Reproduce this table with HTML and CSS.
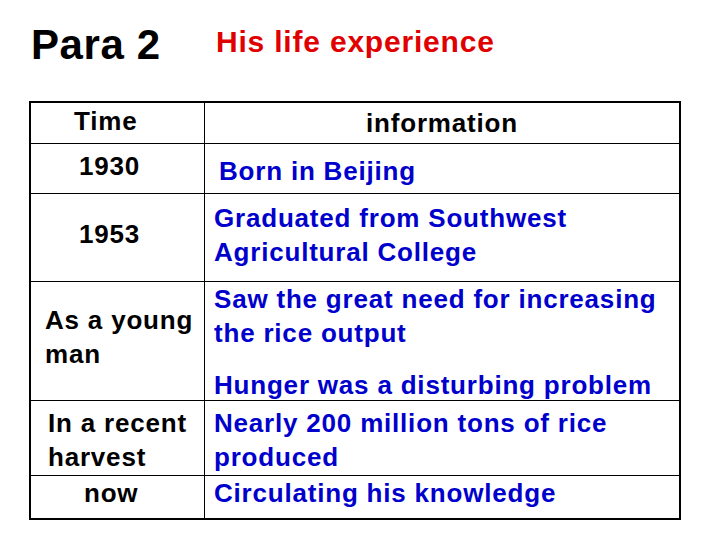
FILE: index.html
```html
<!DOCTYPE html>
<html lang="en">
<head>
<meta charset="utf-8">
<title>Para 2 - His life experience</title>
<link rel="stylesheet" href="styles.css">
</head>
<body>
<div class="slide">
  <div class="heading">
    <h1 class="para">Para 2</h1>
    <h2 class="topic">His life experience</h2>
  </div>
  <div class="grid">
    <div class="cell time c-head"><p class="pt-1">Time</p></div>
    <div class="cell info c-info"><p class="pt-3">information</p></div>

    <div class="cell time c-year"><p class="pt-5">1930</p></div>
    <div class="cell info c-born"><p class="pt-10">Born in Beijing</p></div>

    <div class="cell time c-year"><p class="pt-23">1953</p></div>
    <div class="cell info c-text"><p class="pt-7 shift-left">Graduated from Southwest<br>Agricultural College</p></div>

    <div class="cell time c-young"><p class="pt-21">As a young<br>man</p></div>
    <div class="cell info c-text"><p class="mt-3">Saw the great need for increasing<br>the rice output</p><p class="gap">Hunger was a disturbing problem</p></div>

    <div class="cell time c-recent"><p class="pt-5">In a recent<br>harvest</p></div>
    <div class="cell info c-text"><p class="pt-5">Nearly 200 million tons of rice<br>produced</p></div>

    <div class="cell time c-now last"><p class="mt-2">now</p></div>
    <div class="cell info c-text last"><p class="mt-1">Circulating his knowledge</p></div>
  </div>
</div>
</body>
</html>
```
FILE: styles.css
```css
html, body {
  margin: 0;
  padding: 0;
  background: #ffffff;
}

body {
  font-family: "Liberation Sans", Arial, sans-serif;
  font-weight: bold;
  color: #000000;
}

.slide {
  width: 720px;
  height: 540px;
  box-sizing: border-box;
  padding: 21px 0 0 29px;
  overflow: hidden;
}

.heading {
  display: flex;
  align-items: flex-start;
  height: 48px;
}

.para {
  margin: 0;
  width: 187px;
  box-sizing: border-box;
  padding-left: 2px;
  font-size: 42px;
  line-height: 48px;
  letter-spacing: 0.6px;
  font-weight: bold;
  color: #000000;
}

.topic {
  margin: 3px 0 0 0;
  font-size: 30px;
  line-height: 36px;
  letter-spacing: 0.8px;
  font-weight: bold;
  color: #e00000;
}

.grid {
  margin-top: 32px;
  width: 652px;
  box-sizing: border-box;
  border: 2px solid #000000;
  display: grid;
  grid-template-columns: 174px 1fr;
  grid-template-rows: 41px 50px 88px 119px 75px 42px;
}

.cell {
  box-sizing: border-box;
  border-bottom: 1px solid #000000;
  font-size: 26px;
  line-height: 34px;
  letter-spacing: 0.8px;
  white-space: nowrap;
  overflow: visible;
}

.cell.last {
  border-bottom: none;
}

.cell p {
  margin: 0;
}

.time {
  border-right: 1px solid #000000;
  color: #000000;
}

.info {
  color: #0000cc;
  padding-left: 9px;
}

.c-head { padding-left: 43px; }
.c-year { padding-left: 48px; }
.c-young { padding-left: 14px; }
.c-recent { padding-left: 17px; }
.c-now { padding-left: 53px; }

.c-info {
  color: #000000;
  text-align: center;
  padding-left: 0;
}

.c-born { padding-left: 14px; }

.pt-1 { padding-top: 1px; }
.pt-3 { padding-top: 3px; }
.pt-5 { padding-top: 5px; }
.pt-7 { padding-top: 7px; }
.pt-10 { padding-top: 10px; }
.pt-21 { padding-top: 21px; }
.pt-23 { padding-top: 23px; }
.shift-left { margin-left: -5px; }
.mt-1 { margin-top: -1px; }
.mt-2 { margin-top: -2px; }
.mt-3 { margin-top: -3px; }

.gap {
  margin-top: 18px !important;
}
```
